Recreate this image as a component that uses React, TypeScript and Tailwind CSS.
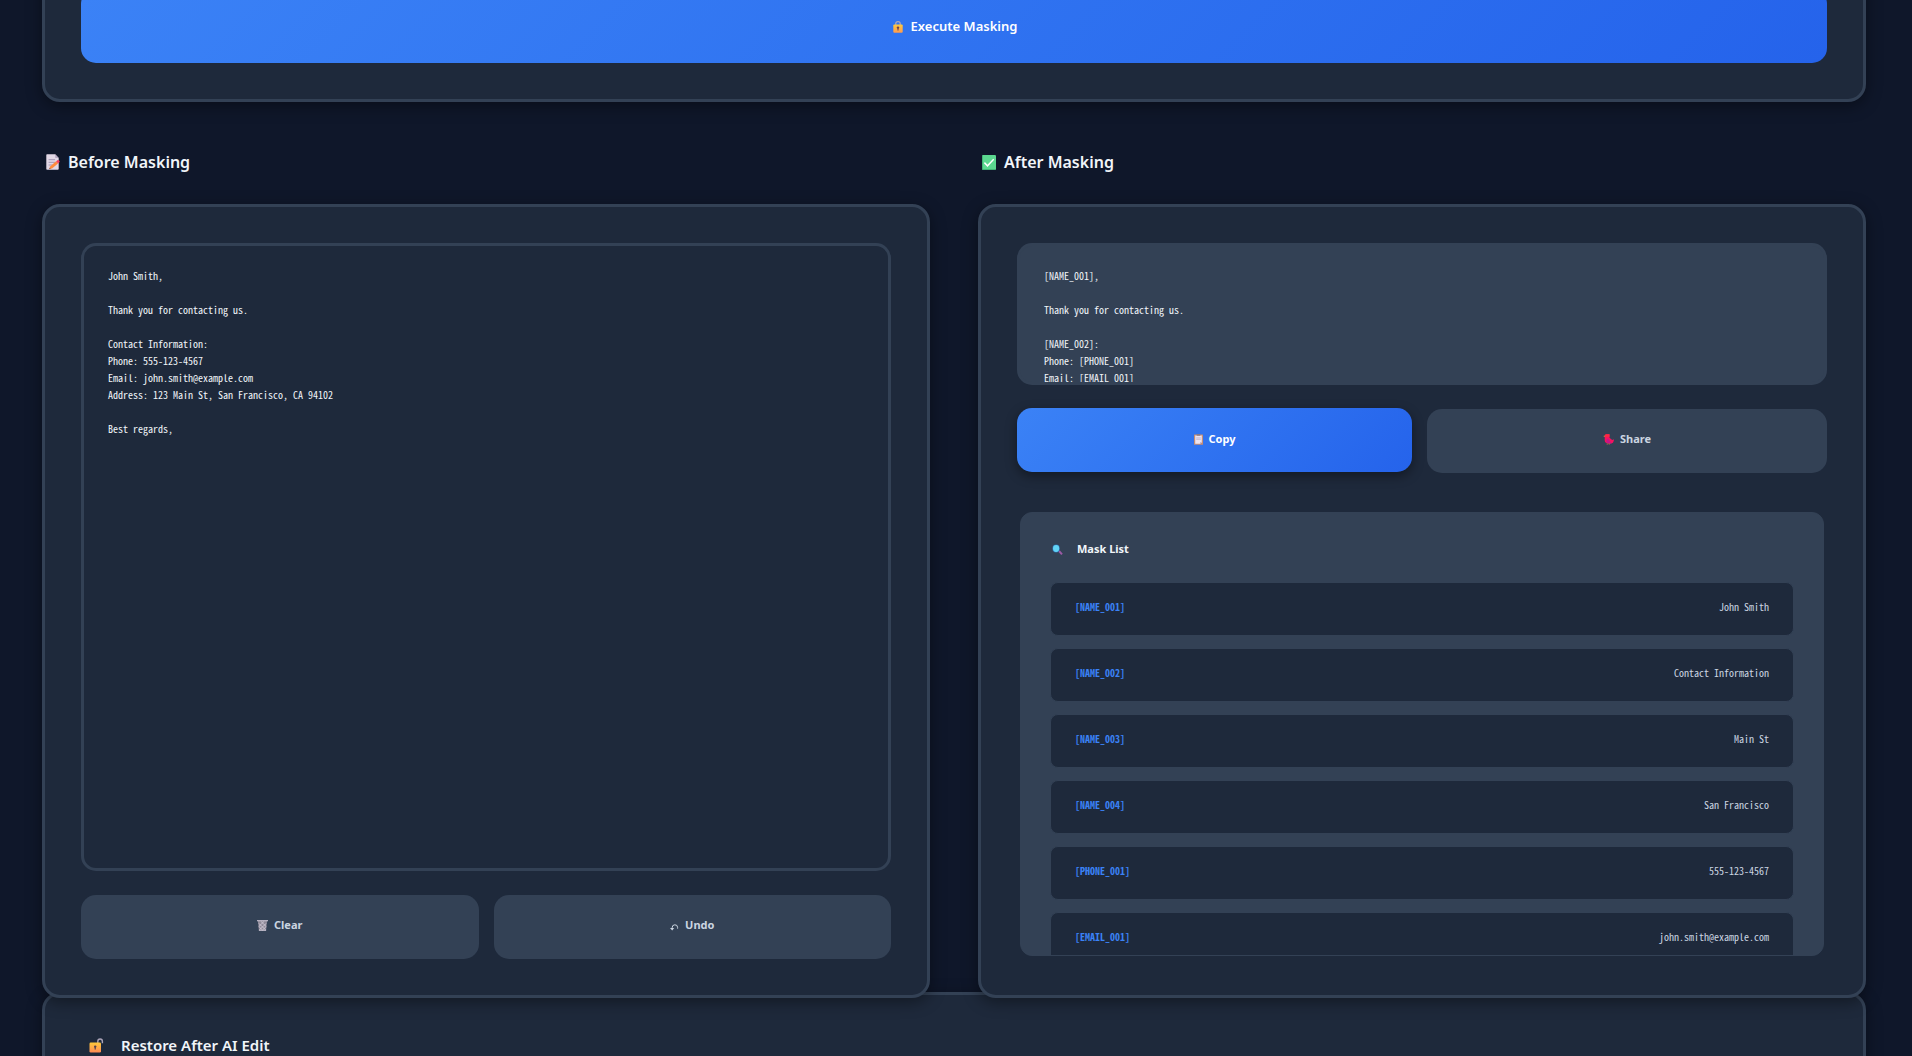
import type { ReactNode } from "react";

const original = `John Smith,

Thank you for contacting us.

Contact Information:
Phone: 555-123-4567
Email: john.smith@example.com
Address: 123 Main St, San Francisco, CA 94102

Best regards,`;

const masked = `[NAME_001],

Thank you for contacting us.

[NAME_002]:
Phone: [PHONE_001]
Email: [EMAIL_001]`;

const masks = [
  { tag: "[NAME_001]", value: "John Smith" },
  { tag: "[NAME_002]", value: "Contact Information" },
  { tag: "[NAME_003]", value: "Main St" },
  { tag: "[NAME_004]", value: "San Francisco" },
  { tag: "[PHONE_001]", value: "555-123-4567" },
  { tag: "[EMAIL_001]", value: "john.smith@example.com" },
];

const mono = "font-['Noto_Sans_Mono_CJK_JP','Noto_Sans_CJK_JP',monospace] text-[10px]";
const card = "rounded-[18px] border-3 border-[#334155] bg-[#1e293b] shadow-[0_4px_16px_rgba(0,0,0,0.4)]";

function LockIcon() {
  return (
    <svg className="h-3 w-[10px]" viewBox="0 0 10 12" aria-hidden="true">
      <path d="M2.8 5V2.6a2.2 2 0 0 1 4.4 0V5" fill="none" stroke="#b3a9b8" strokeWidth="1.2" />
      <rect x="0.3" y="3.5" width="9.4" height="8.3" rx="1" fill="url(#lockGold)" />
      <circle cx="5" cy="6.6" r="1.2" fill="#6b4250" />
      <path d="M5 7v2.6" stroke="#6b4250" strokeWidth="1.1" />
      <defs>
        <linearGradient id="lockGold" x1="0" y1="0" x2="0" y2="1">
          <stop offset="0" stopColor="#fdc93f" />
          <stop offset="1" stopColor="#ff9a4f" />
        </linearGradient>
      </defs>
    </svg>
  );
}

function UnlockIcon() {
  return (
    <svg className="h-[15px] w-[15px]" viewBox="0 0 15 15" aria-hidden="true">
      <path d="M8.8 5.5V3.4a2.3 2.4 0 0 1 4.6 0v1.8" fill="none" stroke="#aba3b8" strokeWidth="1.4" />
      <rect x="0.5" y="4.5" width="11.5" height="10" rx="1.2" fill="url(#unlockGold)" />
      <circle cx="6.2" cy="8.6" r="1.2" fill="#54404e" />
      <path d="M6.2 8.8v2.6" stroke="#54404e" strokeWidth="1.2" />
      <defs>
        <linearGradient id="unlockGold" x1="0" y1="0" x2="0" y2="1">
          <stop offset="0" stopColor="#fcc93a" />
          <stop offset="1" stopColor="#ff8a55" />
        </linearGradient>
      </defs>
    </svg>
  );
}

function MemoIcon() {
  return (
    <svg className="h-4 w-[14px]" viewBox="0 0 14 16" aria-hidden="true">
      <path d="M0.3 1A0.8 0.8 0 0 1 1 0.3h8.2L12.7 4v11a0.8 0.8 0 0 1-.8.7H1a0.8 0.8 0 0 1-.7-.7z" fill="#e2d8e6" />
      <path d="M9.2 0.3 12.7 4H9.8a.6.6 0 0 1-.6-.6z" fill="#b9aac4" />
      <path d="M2.6 5.7h6.5M2.6 8.3h7M2.6 11h4" stroke="#9d8fae" strokeWidth="0.9" />
      <path d="m3.3 15 .8-2.6 6-5.1 1.9 2.2-6 5z" fill="#ff8b3d" />
      <path d="m10.1 7.3 1.3-1a1.4 1.4 0 0 1 1.9 2l-1.3 1.2z" fill="#f8405f" />
      <path d="m3.3 15 .4-1.3 1 1z" fill="#6b3b3b" />
    </svg>
  );
}

function CheckIcon() {
  return (
    <svg className="h-[15px] w-[14px]" viewBox="0 0 15 15" preserveAspectRatio="none" aria-hidden="true">
      <rect width="15" height="15" rx="1.2" fill="#5bd890" />
      <path d="M0.4 1v13a.6.6 0 0 0 .6.6h13" fill="none" stroke="#38a56c" strokeWidth="0.8" />
      <path d="m2.6 7.6 3.3 3.3 6.6-6.6" fill="none" stroke="#fff" strokeWidth="1.5" />
    </svg>
  );
}

function ClipboardIcon() {
  return (
    <svg className="h-[11px] w-[9px]" viewBox="0 0 9 11" aria-hidden="true">
      <rect y="0.4" width="9" height="10.4" rx="0.6" fill="#c68e74" />
      <path d="M1.2 1.5h6.6v6.8L6.3 9.8H1.2z" fill="#ece4f2" />
      <path d="M6.3 9.8V8.3h1.5z" fill="#a98fae" />
      <rect x="2.6" width="3.8" height="1.8" rx="0.5" fill="#8b7a86" />
      <path d="M2.2 3.9h4.6M2.2 5.3h4.6" stroke="#b8a9c6" strokeWidth="0.7" />
    </svg>
  );
}

function BirdIcon() {
  return (
    <svg className="h-[11px] w-[11px]" viewBox="0 0 11 11" aria-hidden="true">
      <path d="M0.2 1.9 2 1.6v1.6z" fill="#c98a3a" />
      <path d="M1.8 1.6A1.8 1.6 0 0 1 3.6.3h2.9v3.5L9.2 6l1.6-.7v1.5A3 3 0 0 1 8 9.4H5A3.5 3.5 0 0 1 1.7 6z" fill="#f5125f" />
      <path d="M1.8 1.6A1.8 1.6 0 0 1 3.6.3h2.9v2.5H1.8z" fill="#fb2b3e" />
      <path d="M5 4.6 8.6 9.4H5.4A2.5 2.5 0 0 1 5 4.6z" fill="#c5148b" />
      <path d="M4.2 9.4v1.3M6.2 9.4v1.3" stroke="#b9863d" strokeWidth="0.8" />
    </svg>
  );
}

function BasketIcon() {
  return (
    <svg className="h-[11px] w-[11px]" viewBox="0 0 11 11" aria-hidden="true">
      <path d="M1 1h9l-.9 9.6H1.9z" fill="#8f8998" />
      <path d="M1.5 3.2 8.8 10M1.8 6.5 5.5 10M4 1.5 9.3 6.6M9.5 3.2 2.2 10M9.2 6.5 5.5 10M7 1.5 1.7 6.6" stroke="#dcd5e2" strokeWidth="0.7" />
      <path d="M0 0.7h11" stroke="#c6becd" strokeWidth="1.2" />
      <path d="M1.9 10.3h7.2" stroke="#d3ccda" strokeWidth="0.9" />
    </svg>
  );
}

function UndoIcon() {
  return (
    <svg className="mt-[3px] h-[7px] w-[9px]" viewBox="0 0 9 7" aria-hidden="true">
      <path d="M2.2 5V3.6A2.6 2.6 0 0 1 7.6 3.4V4.6" fill="none" stroke="#cbd5e1" strokeWidth="1" />
      <path d="M0 4h4.2L2.2 6.6z" fill="#cbd5e1" />
    </svg>
  );
}

function SearchIcon() {
  return (
    <svg className="h-[11px] w-[11px]" viewBox="0 0 11 11" aria-hidden="true">
      <path d="m7 7 3 3.3" stroke="#9b5aa5" strokeWidth="2" />
      <ellipse cx="4.1" cy="4.4" rx="3.7" ry="4" fill="#2f6fb0" />
      <ellipse cx="4.1" cy="4.5" rx="3.1" ry="3.4" fill="#62d3f5" />
    </svg>
  );
}

function SecondaryButton({ icon, children }: { icon: ReactNode; children: ReactNode }) {
  return (
    <button
      type="button"
      className="flex h-16 items-center justify-center gap-[6px] rounded-[15px] bg-[#334155] pb-[3px] text-[11px] font-bold text-[#cbd5e1]"
    >
      {icon}
      {children}
    </button>
  );
}

function SectionTitle({ icon, children }: { icon: ReactNode; children: ReactNode }) {
  return (
    <h2 className="mb-[30px] flex h-6 items-center gap-2 pl-1 text-base font-semibold">
      {icon}
      {children}
    </h2>
  );
}

export default function App() {
  return (
    <main className="h-screen overflow-hidden bg-[#0f172a] pr-[46px] pl-[42px] font-['Noto_Sans',sans-serif] text-[#f1f5f9]">
      <section className={`${card} -mt-[50px] p-9`}>
        <button
          type="button"
          className="flex h-[74px] w-full items-center justify-center gap-2 rounded-[15px] bg-linear-135 from-[#3b82f6] to-[#2563eb] pt-[2px] pl-[2px] text-[13px] font-semibold text-white"
        >
          <LockIcon />
          Execute Masking
        </button>
      </section>

      <div className="relative z-10 mt-12 grid grid-cols-2 gap-12">
        <section className="flex flex-col">
          <SectionTitle icon={<MemoIcon />}>Before Masking</SectionTitle>
          <div className={`${card} flex flex-1 flex-col gap-6 p-9`}>
            <textarea
              aria-label="Before Masking"
              defaultValue={original}
              spellCheck={false}
              className={`${mono} flex-1 resize-none rounded-[15px] border-3 border-[#334155] bg-transparent px-6 py-[21px] leading-[17px] outline-none`}
            />
            <div className="grid grid-cols-2 gap-[15px]">
              <SecondaryButton icon={<BasketIcon />}>Clear</SecondaryButton>
              <SecondaryButton icon={<UndoIcon />}>Undo</SecondaryButton>
            </div>
          </div>
        </section>

        <section className="flex flex-col">
          <SectionTitle icon={<CheckIcon />}>After Masking</SectionTitle>
          <div className={`${card} p-9`}>
            <pre
              className={`${mono} h-[142px] overflow-hidden rounded-[15px] border-3 border-[#334155] bg-[#334155] px-6 pt-[21px] leading-[17px]`}
            >
              {masked}
            </pre>
            <div className="mt-6 grid grid-cols-[395fr_400fr] gap-[15px]">
              <button
                type="button"
                className="flex h-16 -translate-y-px items-center justify-center gap-[6px] rounded-[15px] bg-linear-135 from-[#3b82f6] to-[#2563eb] pb-px text-[11px] font-bold text-white shadow-[0_4px_12px_rgba(0,0,0,0.4)]"
              >
                <ClipboardIcon />
                Copy
              </button>
              <SecondaryButton icon={<BirdIcon />}>Share</SecondaryButton>
            </div>

            <div className="mt-9 h-[450px] p-[3px]">
              <div className="h-full overflow-hidden rounded-xl border border-[#334155] bg-[#334155] px-[29px] pt-7">
                <h3 className="mb-[25px] flex h-4 items-center gap-[14px] pl-[2px] text-[11px] font-bold">
                  <SearchIcon />
                  Mask List
                </h3>
                <ul className="flex flex-col gap-3">
                  {masks.map((m) => (
                    <li
                      key={m.tag}
                      className={`${mono} flex h-[54px] shrink-0 items-center justify-between rounded-lg border border-[#334155] bg-[#1e293b] px-6 pb-[5px]`}
                    >
                      <span className="font-bold text-[#3b82f6]">{m.tag}</span>
                      <span className="text-[#cbd5e1]">{m.value}</span>
                    </li>
                  ))}
                </ul>
              </div>
            </div>
          </div>
        </section>
      </div>

      <section className={`${card} -mt-[6px] p-9`}>
        <h2 className="mt-[2px] flex h-6 items-center gap-[17px] pl-2 text-[15px] font-semibold">
          <UnlockIcon />
          Restore After AI Edit
        </h2>
      </section>
    </main>
  );
}
